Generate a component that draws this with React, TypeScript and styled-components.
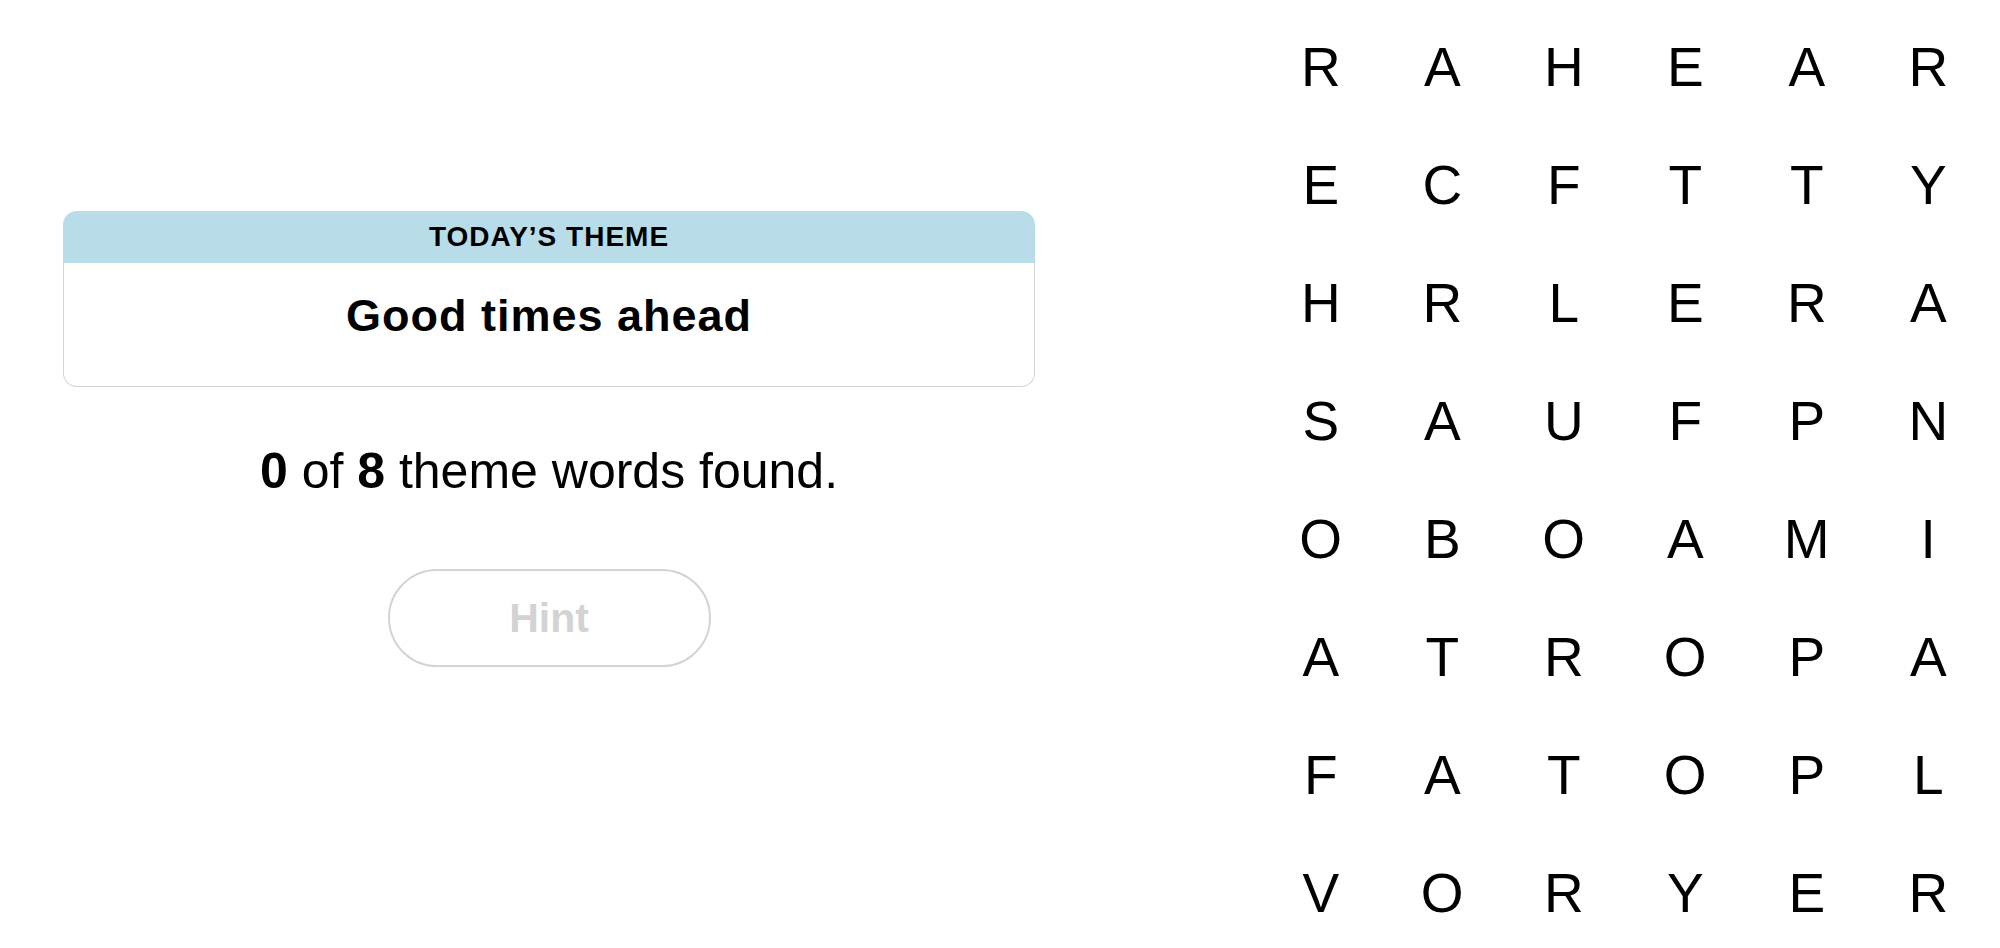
import React from "react";
import styled, { createGlobalStyle } from "styled-components";

const GlobalStyle = createGlobalStyle`
  html, body {
    margin: 0;
    padding: 0;
    background: #ffffff;
  }
  body {
    font-family: "Liberation Sans", Arial, sans-serif;
    color: #000000;
  }
`;

const Page = styled.div`
  display: flex;
  align-items: flex-start;
  width: 2000px;
  height: 948px;
  overflow: hidden;
  box-sizing: border-box;
  padding-left: 63px;
  gap: 225px;
`;

const InfoPanel = styled.section`
  width: 972px;
  padding-top: 211px;
  display: flex;
  flex-direction: column;
  align-items: center;
`;

const ThemeCard = styled.div`
  width: 100%;
  display: flex;
  flex-direction: column;
`;

const ThemeHeader = styled.div`
  height: 52px;
  background: #b8dde9;
  border-radius: 14px 14px 0 0;
  display: flex;
  align-items: center;
  justify-content: center;
  font-size: 28px;
  font-weight: 700;
  letter-spacing: 1px;
  line-height: 1;
`;

const ThemeBody = styled.div`
  box-sizing: border-box;
  height: 124px;
  border: 1px solid #d4d4d4;
  border-top: none;
  border-radius: 0 0 14px 14px;
  padding-top: 26px;
  display: flex;
  justify-content: center;
  font-size: 45px;
  font-weight: 700;
  letter-spacing: 1px;
  line-height: 54px;
`;

const Progress = styled.p`
  margin: 54px 0 0;
  font-size: 50px;
  line-height: 60px;
  font-weight: 400;
  text-align: center;
`;

const Count = styled.b`
  font-weight: 700;
`;

const HintButton = styled.button`
  margin-top: 68px;
  width: 323px;
  height: 98px;
  box-sizing: border-box;
  border: 2px solid #d3d3d3;
  border-radius: 49px;
  background: #ffffff;
  color: #d3d3d3;
  font-family: "Liberation Sans", Arial, sans-serif;
  font-size: 41px;
  font-weight: 700;
  display: flex;
  align-items: center;
  justify-content: center;
  padding: 0;
  cursor: default;
`;

const Board = styled.div`
  display: grid;
  grid-template-columns: repeat(6, 121.5px);
  grid-auto-rows: 118px;
  padding-top: 8px;
`;

const Cell = styled.div`
  display: flex;
  align-items: center;
  justify-content: center;
  font-size: 55px;
  font-weight: 400;
  line-height: 1;
  color: #000000;
`;

const rows = [
  "RAHEAR",
  "ECFTTY",
  "HRLERA",
  "SAUFPN",
  "OBOAMI",
  "ATROPA",
  "FATOPL",
  "VORYER",
];

export default function App() {
  return (
    <>
      <GlobalStyle />
      <Page>
        <InfoPanel>
          <ThemeCard>
            <ThemeHeader>TODAY’S THEME</ThemeHeader>
            <ThemeBody>Good times ahead</ThemeBody>
          </ThemeCard>
          <Progress>
            <Count>0</Count> of <Count>8</Count> theme words found.
          </Progress>
          <HintButton disabled>Hint</HintButton>
        </InfoPanel>
        <Board>
          {rows.map((row, r) =>
            row.split("").map((ch, c) => <Cell key={`${r}-${c}`}>{ch}</Cell>)
          )}
        </Board>
      </Page>
    </>
  );
}
